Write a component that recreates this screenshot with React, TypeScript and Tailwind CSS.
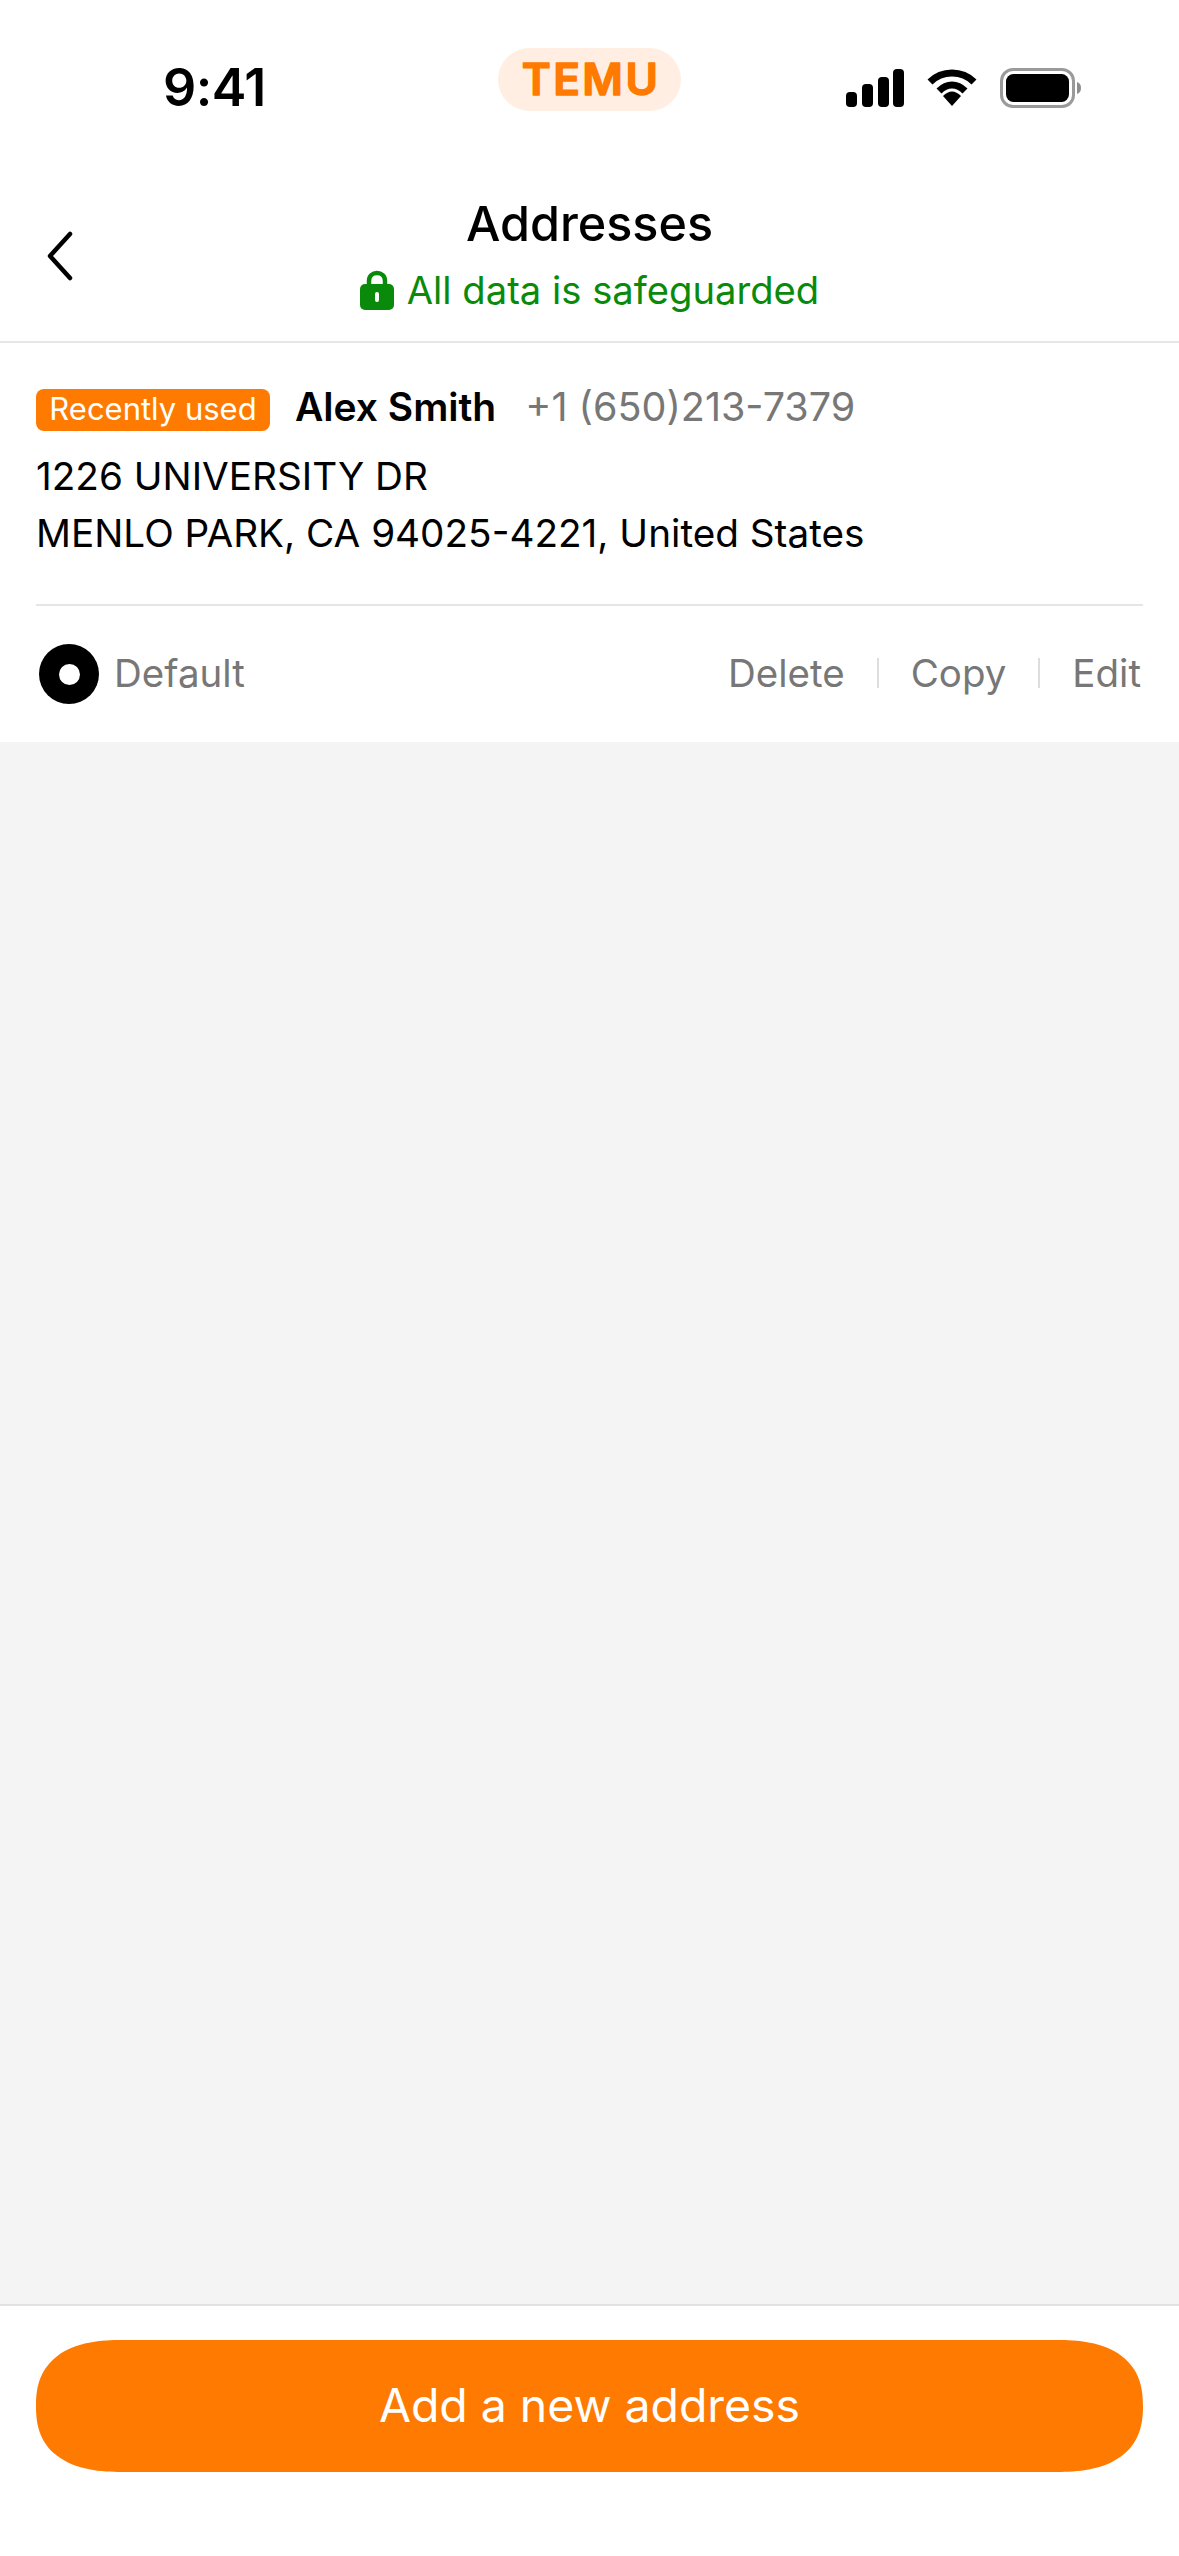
export default function App() {
  return (
    <div className="flex h-[2556px] w-[1179px] flex-col bg-white font-['Inter',sans-serif] text-black">
      <div className="grid h-[140px] shrink-0 grid-cols-[1fr_183px_1fr] items-start">
        <span className="mt-[56px] pl-[163px] text-[52px] leading-[63px] font-semibold tracking-[-0.5px]">9:41</span>
        <div className="mt-[48px] flex h-[63px] w-[183px] items-center justify-center rounded-full bg-[#ffeee1]">
          <svg width="183" height="63" viewBox="0 0 183 63" aria-label="TEMU">
            <text x="93" y="47" textAnchor="middle" fontFamily="Inter" fontWeight="600" fontSize="44" letterSpacing="2.5" fill="#ff7a00" stroke="#ff7a00" strokeWidth="1.5" strokeLinejoin="round">TEMU</text>
          </svg>
        </div>
        <div className="mt-[68px] flex items-start justify-end gap-[23px] pr-[98px]">
          <svg className="mt-[1px]" width="58" height="38" viewBox="0 0 58 38" fill="#000">
            <rect x="0" y="23" width="11" height="15" rx="4" />
            <rect x="16" y="15" width="11" height="23" rx="4" />
            <rect x="32" y="8" width="11" height="30" rx="4" />
            <rect x="47" y="0" width="11" height="38" rx="4" />
          </svg>
          <svg className="mt-[1px]" width="50" height="38" viewBox="0 0 50 38" fill="none" stroke="#000" strokeWidth="7">
            <path d="M3 13 C15 1 35 1 47 13" />
            <path d="M12 22 C20 14 30 14 38 22" />
            <path d="M16 27 L25 37 L34 27 C28 21 22 21 16 27 Z" fill="#000" stroke="none" />
          </svg>
          <svg width="81" height="40" viewBox="0 0 81 40">
            <rect x="1.5" y="1.5" width="72" height="37" rx="11.5" fill="none" stroke="#9a9a9a" strokeWidth="3" />
            <rect x="6" y="6" width="63" height="28" rx="7.5" fill="#000" />
            <path d="M77 14 C80 15 81 17 81 20 C81 23 80 25 77 26 Z" fill="#8e8e8e" />
          </svg>
        </div>
      </div>

      <header className="relative flex h-[203px] shrink-0 flex-col items-center border-b-2 border-[#e6e6e6] pt-[55px]">
        <svg className="absolute left-[46px] top-[91px]" width="28" height="50" viewBox="0 0 28 50" fill="none" stroke="#000" strokeWidth="4.5" strokeLinecap="round" strokeLinejoin="round">
          <path d="M24 3 L4 25 L24 47" />
        </svg>
        <h1 className="text-[48.5px] leading-[58px] font-medium">Addresses</h1>
        <div className="mt-[13px] flex items-center gap-[13px] text-[38.2px] leading-[48px] text-[#0a8a0a]">
          <svg width="34" height="40" viewBox="0 0 34 40">
            <path d="M9 16 V11 C9 6 12.5 3 17 3 C21.5 3 25 6 25 11 V16" fill="none" stroke="#0a8a0a" strokeWidth="4.5" />
            <rect x="0" y="14" width="34" height="26" rx="5" fill="#0a8a0a" />
            <rect x="15" y="22" width="4" height="10" rx="2" fill="#fff" />
          </svg>
          <span>All data is safeguarded</span>
        </div>
      </header>

      <section className="shrink-0 bg-white px-[36px]">
        <div className="flex h-[263px] flex-col border-b-2 border-[#e6e6e6] pt-[43px]">
          <div className="flex items-center">
            <span className="flex h-[42px] w-[234px] items-center justify-center rounded-[8px] bg-[#ff7a00] pb-[2px] text-[31px] leading-[40px] text-white">Recently used</span>
            <span className="ml-[25px] -translate-y-[3px] text-[39px] leading-[48px] font-semibold">Alex Smith</span>
            <span className="ml-[29px] -translate-y-[3px] text-[39.5px] leading-[48px] text-[#777777]">+1 (650)213-7379</span>
          </div>
          <p className="mt-[14px] text-[38.7px] leading-[57px]">
            1226 UNIVERSITY DR
            <br />
            MENLO PARK, CA 94025-4221, United States
          </p>
        </div>
        <div className="flex h-[136px] items-center justify-between text-[38.5px] leading-[48px] text-[#777777]">
          <div className="flex items-center">
            <span className="ml-[3px] flex h-[60px] w-[60px] items-center justify-center rounded-full bg-black">
              <span className="h-[21px] w-[21px] rounded-full bg-white" />
            </span>
            <span className="mb-[2px] ml-[15px]">Default</span>
          </div>
          <div className="mb-[2px] flex items-center pr-[2px]">
            <span>Delete</span>
            <span className="mx-[32px] h-[30px] w-[2px] bg-[#dddddd]" />
            <span>Copy</span>
            <span className="mx-[32px] h-[30px] w-[2px] bg-[#dddddd]" />
            <span>Edit</span>
          </div>
        </div>
      </section>

      <main className="flex-1 bg-[#f4f4f4]" />

      <footer className="h-[252px] shrink-0 border-t-2 border-[#e2e2e2] bg-white px-[36px] pt-[34px]">
        <button className="flex h-[132px] w-full items-center justify-center rounded-[86px/66px] bg-[#ff7a00] text-[46.4px] text-white [corner-shape:superellipse(1.3)]">
          Add a new address
        </button>
      </footer>
    </div>
  );
}
